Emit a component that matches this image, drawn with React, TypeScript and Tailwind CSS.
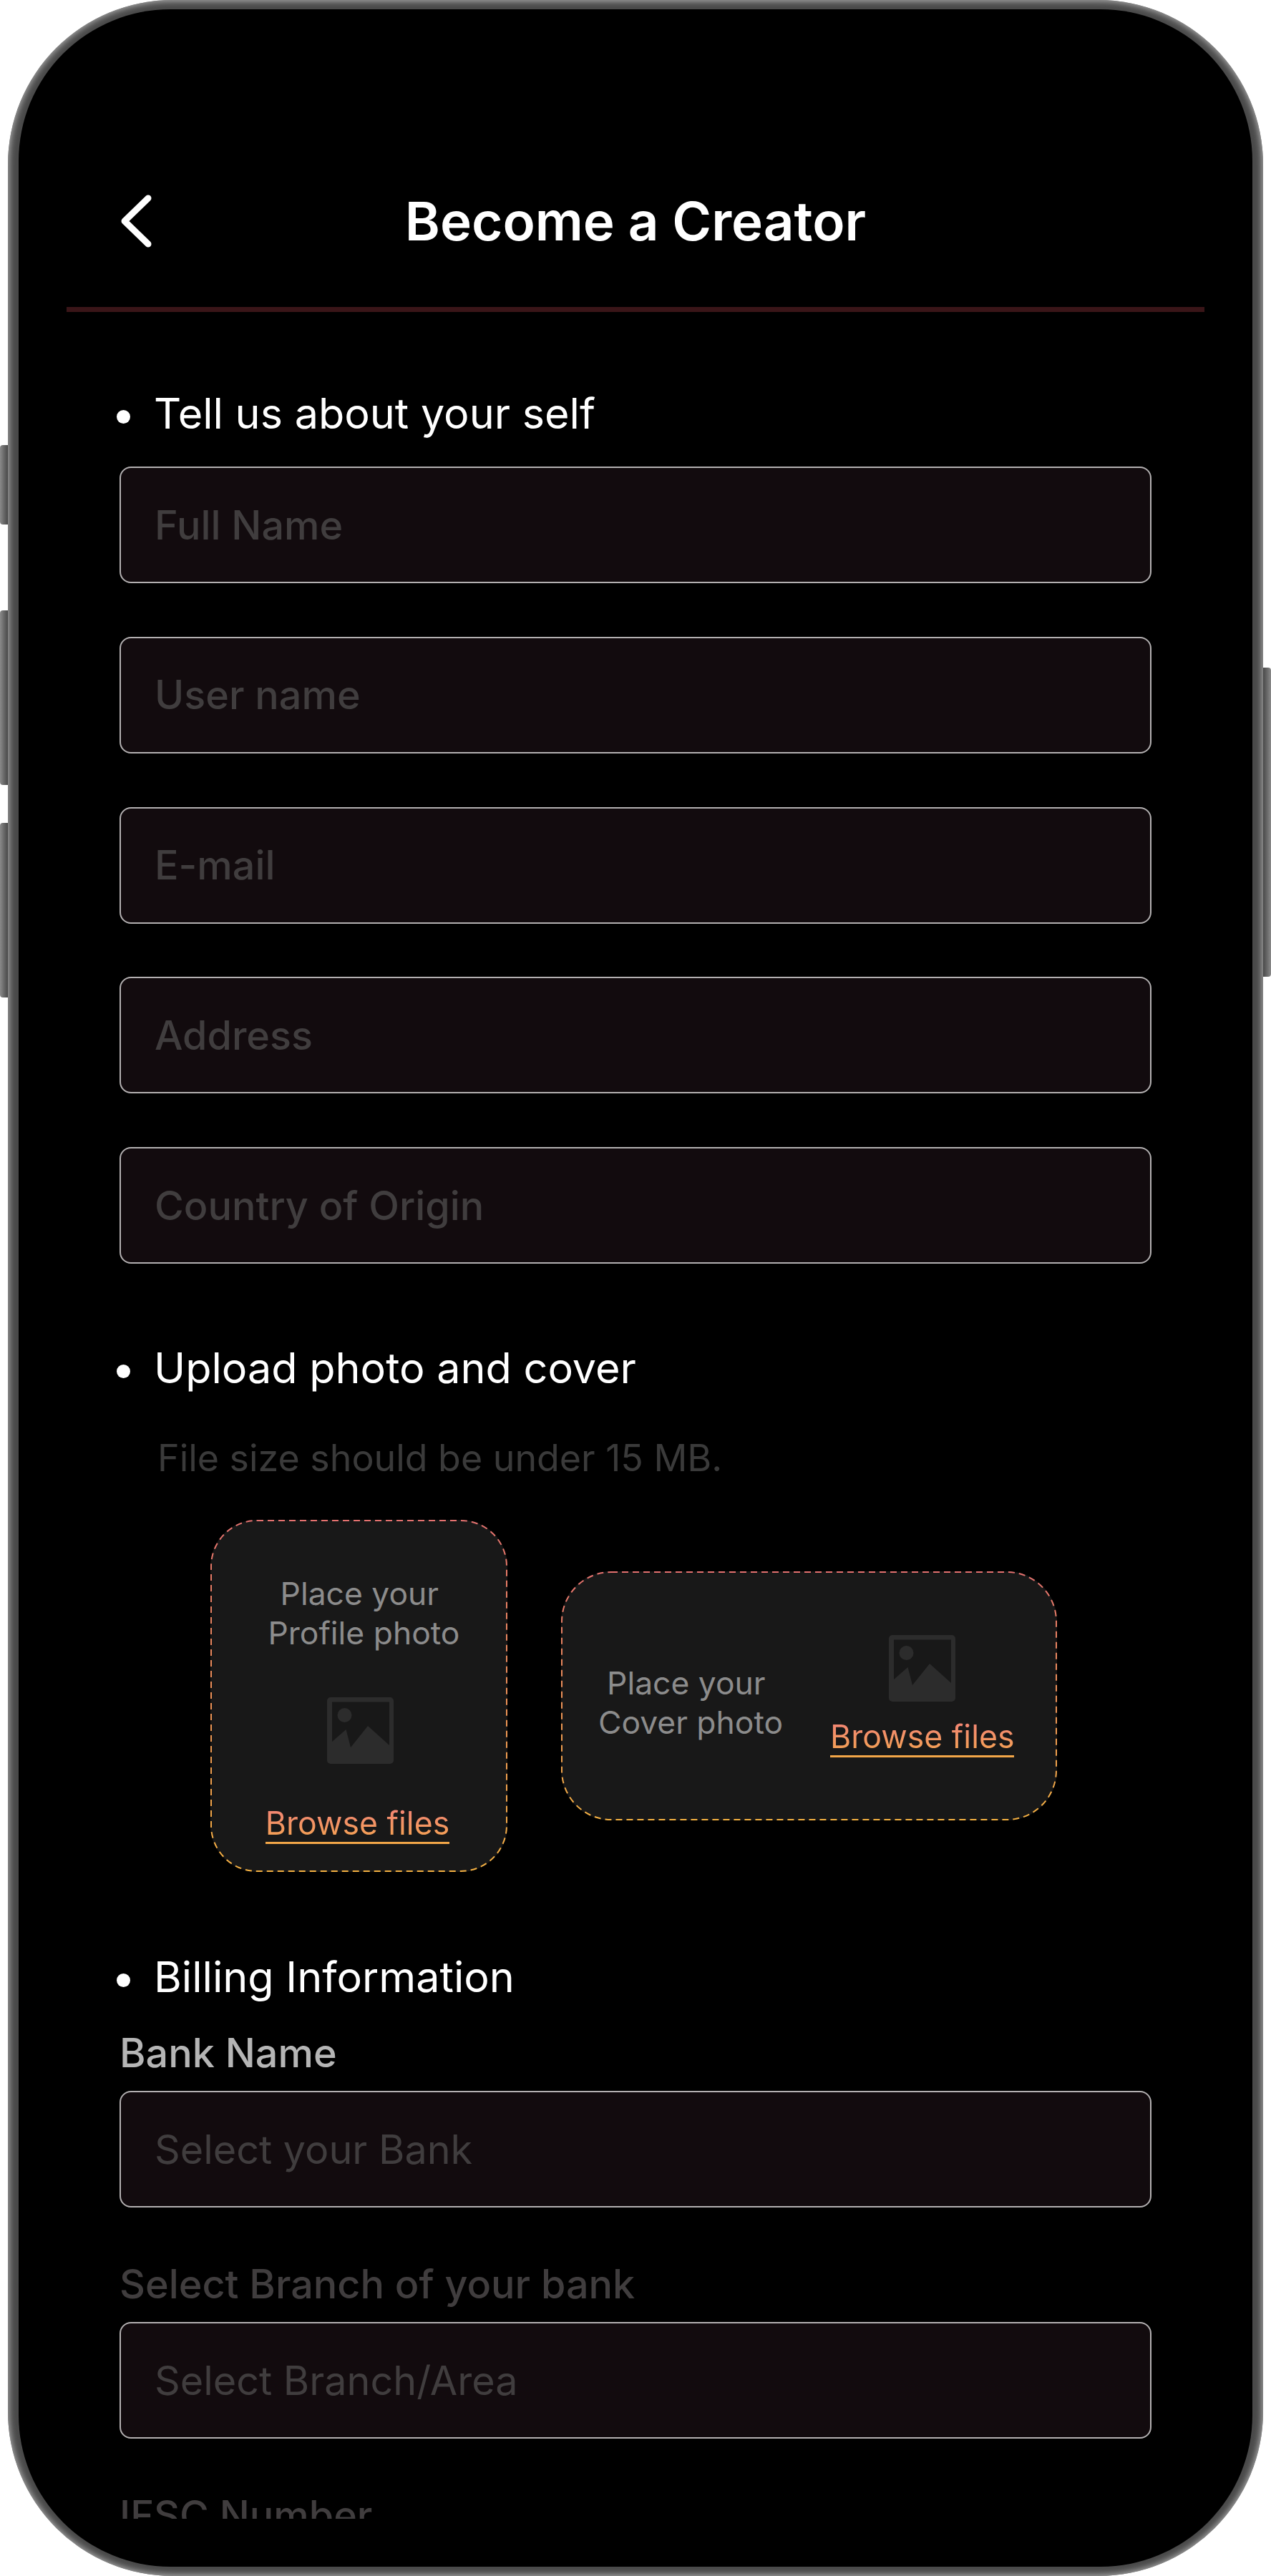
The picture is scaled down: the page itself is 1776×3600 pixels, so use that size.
const inputs = ["Full Name", "User name", "E-mail", "Address", "Country of Origin"];

function Field({ placeholder, medium }: { placeholder: string; medium?: boolean }) {
  return (
    <div
      className={`flex h-[163px] items-center rounded-[16px] border-2 border-[#b3b0b1] bg-[#120b0e] pl-[47px] text-[55.7px] text-[#403d3e] ${
        medium ? "font-medium" : "font-normal"
      }`}
    >
      {placeholder}
    </div>
  );
}

function SectionHeading({ children, className }: { children: string; className: string }) {
  return (
    <div className={`ml-[-4px] flex h-[80px] items-center gap-[33px] text-[59.3px] text-white ${className}`}>
      <span className="mt-[8px] h-[19px] w-[19px] rounded-full bg-white" />
      {children}
    </div>
  );
}

function ImageIcon() {
  return (
    <svg width="93" height="93" viewBox="0 0 93 93" className="shrink-0">
      <path
        fill="#2c2c2c"
        fillRule="evenodd"
        d="M5 0H88A5 5 0 0 1 93 5V88A5 5 0 0 1 88 93H5A5 5 0 0 1 0 88V5A5 5 0 0 1 5 0ZM7 6.5V62L26.5 45L33 70L57 40L87 67V6.5Z"
      />
      <circle cx="24.5" cy="25" r="10" fill="#2c2c2c" />
    </svg>
  );
}

function DashedBorder({ id, width, height, radius }: { id: string; width: number; height: number; radius: number }) {
  return (
    <svg width={width} height={height} className="pointer-events-none absolute inset-0">
      <defs>
        <linearGradient id={id} x1="0" y1="0" x2="0" y2="1">
          <stop offset="0" stopColor="#e4716f" />
          <stop offset="1" stopColor="#f5b142" />
        </linearGradient>
      </defs>
      <rect
        x="1"
        y="1"
        width={width - 2}
        height={height - 2}
        rx={radius}
        fill="none"
        stroke={`url(#${id})`}
        strokeWidth="2"
        strokeDasharray="9 6"
      />
    </svg>
  );
}

function BrowseFiles() {
  return (
    <div className="border-b-[3px] border-[#f2a648] text-[44.6px] leading-[52px]">
      <span className="bg-gradient-to-b from-[#f27f78] to-[#f4a64a] bg-clip-text text-transparent">Browse files</span>
    </div>
  );
}

export default function App() {
  return (
    <div className="relative h-[3600px] w-[1776px] bg-white font-['Inter',sans-serif]">
      {/* side buttons */}
      <div className="absolute left-0 top-[622px] h-[111px] w-[12px] rounded-l-[4px] bg-gradient-to-r from-[#8a8a8a] to-[#444]" />
      <div className="absolute left-0 top-[853px] h-[244px] w-[12px] rounded-l-[4px] bg-gradient-to-r from-[#8a8a8a] to-[#444]" />
      <div className="absolute left-0 top-[1150px] h-[244px] w-[12px] rounded-l-[4px] bg-gradient-to-r from-[#8a8a8a] to-[#444]" />
      <div className="absolute right-0 top-[933px] h-[432px] w-[12px] rounded-r-[4px] bg-gradient-to-l from-[#8a8a8a] to-[#444]" />

      <div className="absolute bottom-0 left-[11px] right-[11px] top-0 rounded-[230px] bg-[#4a4a4a] px-[15px] py-[13px] shadow-[inset_0_0_8px_2px_#a8a8a8]">
        <div className="h-full overflow-hidden rounded-[212px] bg-black">
          <header className="pt-[236px]">
            <div className="grid h-[120px] grid-cols-[1fr_auto_1fr] items-center px-[142px]">
              <svg width="44" height="74" viewBox="0 0 44 74" fill="none">
                <path d="M39 5L6 37L39 69" stroke="white" strokeWidth="9" strokeLinecap="round" strokeLinejoin="round" />
              </svg>
              <h1 className="text-[74.5px] font-semibold leading-none text-white">Become a Creator</h1>
              <span />
            </div>
            <div className="mx-[67px] mt-[60px] h-[7px] bg-[#3a1518]" />
          </header>

          <main className="h-[3084px] overflow-hidden px-[141px]">
            <SectionHeading className="mt-[102px]">Tell us about your self</SectionHeading>
            <div className="mt-[34px] flex flex-col gap-[74.75px]">
              {inputs.map((label) => (
                <Field key={label} placeholder={label} medium />
              ))}
            </div>

            <SectionHeading className="mt-[106px]">Upload photo and cover</SectionHeading>
            <p className="ml-[53px] mt-[56px] flex h-[60px] items-center text-[51.9px] text-[#3a3a3a]">
              File size should be under 15 MB.
            </p>

            <div className="ml-[127px] mt-[56px] flex items-center gap-[75px]">
              <div className="relative flex h-[492px] w-[415px] flex-col items-center rounded-[65px] bg-[#181818] pt-[76px]">
                <DashedBorder id="profile-border" width={415} height={492} radius={64} />
                <p className="ml-[14px] whitespace-pre text-center text-[44.4px] leading-[55px] text-[#8c8c8c]">
                  {"Place your \nProfile photo"}
                </p>
                <div className="ml-[4px] mt-[62px]">
                  <ImageIcon />
                </div>
                <div className="mr-[4px] mt-[57px]">
                  <BrowseFiles />
                </div>
              </div>

              <div className="relative flex h-[348px] w-[693px] items-center rounded-[70px] bg-[#181818] pl-[52px]">
                <DashedBorder id="cover-border" width={693} height={348} radius={69} />
                <p className="mt-[20px] whitespace-pre text-center text-[44.4px] leading-[55px] text-[#8c8c8c]">
                  {"Place your \nCover photo"}
                </p>
                <div className="ml-[66px] flex flex-col items-center">
                  <ImageIcon />
                  <div className="mt-[23px]">
                    <BrowseFiles />
                  </div>
                </div>
              </div>
            </div>

            <SectionHeading className="mt-[107px]">Billing Information</SectionHeading>
            <p className="mt-[36px] flex h-[60px] items-center text-[55.7px] font-medium text-[#b5b5b5]">Bank Name</p>
            <div className="mt-[23px]">
              <Field placeholder="Select your Bank" />
            </div>
            <p className="mt-[77px] flex h-[60px] items-center text-[55.7px] font-medium text-[#403d3e]">
              Select Branch of your bank
            </p>
            <div className="mt-[23px]">
              <Field placeholder="Select Branch/Area" />
            </div>
            <p className="mt-[77px] flex h-[60px] items-center text-[55.7px] font-medium text-[#403d3e]">IFSC Number</p>
          </main>
        </div>
      </div>
    </div>
  );
}
